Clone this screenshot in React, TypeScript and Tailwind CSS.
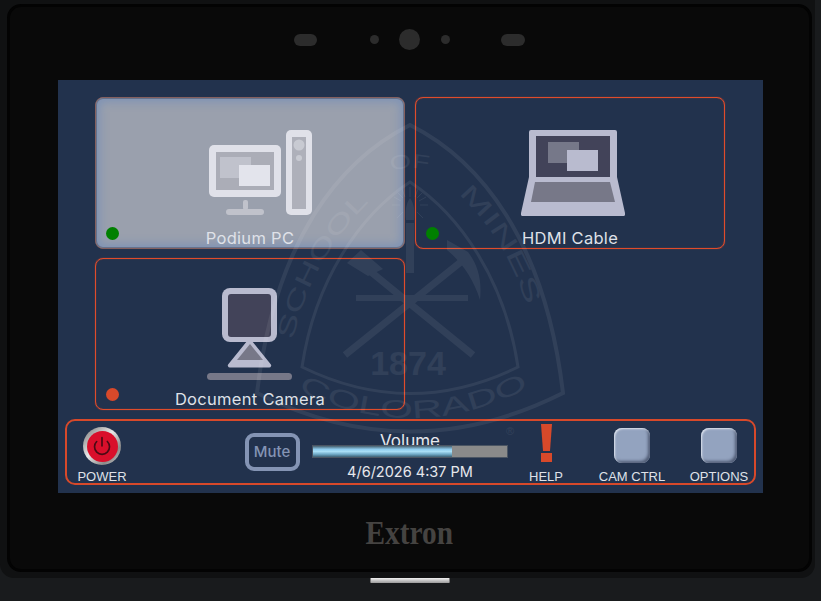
// App.tsx
import React from "react";
import { Power } from "lucide-react";

const sans = "font-['Inter',sans-serif]";
const arial = "font-['Liberation_Sans',sans-serif]";

// Podium PC: monitor + tower
const PcIcon = () => (
  <svg width="103" height="85" viewBox="209 130 103 85">
    <rect x="209" y="145" width="72" height="52" rx="5" fill="#e0e1e9" />
    <rect x="216" y="152" width="58" height="38" fill="#abadb7" />
    <rect x="220" y="157" width="31" height="21" fill="#c0c2cc" />
    <rect x="239" y="165" width="31" height="21" fill="#e3e4ec" />
    <rect x="243" y="200" width="5" height="10" rx="2" fill="#c0c2cb" />
    <rect x="226" y="209" width="38" height="6" rx="3" fill="#c0c2cb" />
    <rect x="286" y="130" width="26" height="85" rx="5" fill="#e0e1e9" />
    <rect x="292" y="137" width="14" height="72" fill="#aeb0ba" />
    <circle cx="299" cy="145" r="5.5" fill="#c8cad2" />
    <circle cx="299" cy="158" r="3" fill="#c8cad2" />
  </svg>
);

const LaptopIcon = () => (
  <svg width="104" height="86" viewBox="521 130 104 86">
    <path d="M531 130h84a2 2 0 0 1 2 2v45l8 36a2 2 0 0 1-2 3H523a2 2 0 0 1-2-3l8-36v-45a2 2 0 0 1 2-2z" fill="#b9bbcf" />
    <rect x="536" y="136" width="74" height="41" fill="#424359" />
    <rect x="548" y="142" width="31" height="21" fill="#767889" />
    <rect x="567" y="150" width="31" height="21" fill="#b9bbcf" />
    <path d="M535 182h75l5 20h-84z" fill="#777888" />
  </svg>
);

const DocCamIcon = () => (
  <svg width="86" height="92" viewBox="208 288 86 92">
    <path d="M250.5 338l21 26a2 2 0 0 1-1.5 3.5h-39a2 2 0 0 1-1.500-3.500z" fill="#b9bbcf" />
    <rect x="223" y="288" width="55" height="54" rx="8" fill="#b9bbcf" />
    <rect x="229" y="294" width="43" height="43" rx="3" fill="#424359" />
    <path d="M251 344l13 16h-26z" fill="#777888" />
    <rect x="208" y="373" width="85" height="7" rx="3.500" fill="#777888" />
  </svg>
);

// School crest watermark, sits over the cards at very low opacity
const Crest = () => (
  <svg
    className="absolute inset-0 pointer-events-none opacity-[0.065]"
    width="705"
    height="413"
    viewBox="58 80 705 413"
  >
    <defs>
      <path id="arc-school" d="M293 340C305 282 338 228 380 192" />
      <path id="arc-of" d="M391 171Q411 165 431 171" />
      <path id="arc-mines" d="M458 194C492 226 518 268 528 314" />
      <path id="arc-colorado" d="M298 390Q410 446 524 390" />
    </defs>
    <g fill="none" stroke="#fff">
      <path strokeWidth="4" d="M410 125C340 160 275 240 257 393Q410 470 563 393C545 240 480 160 410 125z" />
      <path strokeWidth="3" d="M410 182C360 215 315 280 302 367Q410 420 518 367C505 280 460 215 410 182z" />
      <path strokeWidth="7" d="M345 355L467 257" />
      <path strokeWidth="7" d="M473 355L360 263" />
      <path strokeWidth="6" d="M356 298H468" />
      <path strokeWidth="8" d="M410 223V273" />
      <path strokeWidth="1" d="M410 187V197M392 205H400M420 205H428M397 192L403 198M423 192L417 198M397 218L403 212M423 218L417 212M402 189L405 197M418 189L415 197M394 197L401 201M426 197L419 201" />
    </g>
    <g fill="#fff">
      <path d="M410 198c4 6 5 12 4 22h-8c-1-10 0-16 4-22z" />
      <path d="M347 263l14-13 22 19-15 7z" />
      <path d="M447 240l21 12C478 265 482 280 480 300 474 280 462 262 447 250z" />
      <text x="408" y="375" textAnchor="middle" fontFamily="Liberation Sans" fontWeight="700" fontSize="34">1874</text>
      <g fontFamily="Liberation Sans" fontSize="24">
        <text><textPath href="#arc-school" textLength="160" lengthAdjust="spacingAndGlyphs">SCHOOL</textPath></text>
        <text fontSize="20"><textPath href="#arc-of" textLength="38" lengthAdjust="spacingAndGlyphs">OF</textPath></text>
        <text><textPath href="#arc-mines" textLength="132" lengthAdjust="spacingAndGlyphs">MINES</textPath></text>
      </g>
      <text fontFamily="Liberation Sans" fontSize="25">
        <textPath href="#arc-colorado" textLength="240" lengthAdjust="spacingAndGlyphs">COLORADO</textPath>
      </text>
      <text x="510" y="435" textAnchor="middle" fontFamily="Liberation Sans" fontSize="11">®</text>
    </g>
  </svg>
);

interface SourceCardProps {
  label: string;
  dot: string;
  selected?: boolean;
  children: React.ReactNode;
}

const SourceCard: React.FC<SourceCardProps> = ({ label, dot, selected, children }) => (
  <div
    className={`relative h-[152px] w-[310px] rounded-[8px] border flex flex-col items-center justify-between ${
      selected
        ? "border-[#85605f] bg-[#9aa0ad] shadow-[inset_0_0_0_1px_#66728c,inset_0_0_9px_4px_#7f93b5] pt-[32px]"
        : "border-[#e04c2b] shadow-[inset_0_0_1px_#d8492a,0_0_1px_#d8492a] pt-[29px]"
    }`}
  >
    {children}
    <span className={`${sans} text-[16.5px] leading-[20px] tracking-[0.3px] text-[#dfe1e8]`}>{label}</span>
    <span className={`absolute left-[10px] bottom-[8px] h-[13px] w-[13px] rounded-full ${dot}`} />
  </div>
);

const BevelButton = () => (
  <div className="h-[35px] w-[36px] rounded-[8px] bg-[#93a3bf] shadow-[inset_1px_1px_2px_#e0e6f0,inset_-2px_-2px_3px_#4f5b74]" />
);

const BarLabel = ({ children }: { children: React.ReactNode }) => (
  <span className={`${arial} -mb-[1px] text-[13px] leading-[14px] text-[#dfe1e8] whitespace-nowrap`}>{children}</span>
);

const ControlBar = () => (
  <div className="ml-[7px] mt-[9px] flex h-[66px] w-[691px] rounded-[10px] border-2 border-[#d8492a]">
    <div className="flex w-[70px] flex-col items-center justify-between pt-[6px]">
      <div className="flex h-[38px] w-[38px] items-center justify-center rounded-full bg-[linear-gradient(135deg,#777,#e8e8e8_45%,#8a8a8a_75%,#d0d0d0)]">
        <div className="flex h-[31px] w-[31px] items-center justify-center rounded-full bg-[#d90f2b]">
          <Power size={20} strokeWidth={2} className="text-[#4a0a14]" />
        </div>
      </div>
      <BarLabel>POWER</BarLabel>
    </div>

    <div className="ml-[108px] mt-[12px] flex h-[38px] w-[55px] items-center justify-center rounded-[9px] border-4 border-[#8494b4]">
      <span className={`${sans} -ml-[1px] text-[15px] font-medium text-[#8494b4]`}>Mute</span>
    </div>

    <div className="ml-[12px] flex w-[196px] flex-col items-center">
      <span className={`${sans} mt-[10px] text-[17px] leading-[20px] text-[#e6e7ec]`}>Volume</span>
      <div className="relative -mt-[6px] h-[13px] w-[196px] border border-[#4b5563] bg-[#8a8a8a]">
        <div className="h-full w-[139px] bg-[linear-gradient(180deg,#47606f,#8fcdf0_30%,#a9def5_50%,#6fa9c6_75%,#3d5f73)]" />
      </div>
      <span className={`${sans} mt-[4px] text-[14.500px] leading-[20px] text-[#e6e7ec] whitespace-nowrap`}>4/6/2026 4:37 PM</span>
    </div>

    <div className="ml-[18px] flex w-[40px] flex-col items-center justify-between pt-[3px]">
      <svg width="11" height="38" viewBox="0 0 11 38">
        <path d="M0 0h11l-2 27H2z" fill="#d8492a" />
        <rect y="29" width="11" height="9" fill="#d8492a" />
      </svg>
      <BarLabel>HELP</BarLabel>
    </div>

    <div className="ml-[28px] flex w-[76px] flex-col items-center justify-between pt-[7px]">
      <BevelButton />
      <BarLabel>CAM CTRL</BarLabel>
    </div>

    <div className="ml-[14px] flex w-[70px] flex-col items-center justify-between pt-[7px]">
      <BevelButton />
      <BarLabel>OPTIONS</BarLabel>
    </div>
  </div>
);

const App: React.FC = () => {
  return (
    <div className="h-[601px] w-[821px] overflow-hidden bg-[#191b1d]">
      {/* housing */}
      <div className="h-[578px] w-[815px] rounded-b-[14px] bg-[#101112] pl-[7px] pt-[4px]">
        <div className="h-[568px] w-[805px] rounded-[14px] border-[3px] border-[#030303] bg-[#090909]">
          {/* camera + sensors */}
          <div className="flex h-[65px] items-center pl-[284px]">
            <span className="h-[12px] w-[23px] rounded-full bg-[#2c2c2c]" />
            <span className="ml-[53px] h-[9px] w-[9px] rounded-full bg-[#2c2c2c]" />
            <span className="ml-[20px] h-[21px] w-[21px] rounded-full bg-[#2c2c2c]" />
            <span className="ml-[21px] h-[9px] w-[9px] rounded-full bg-[#2c2c2c]" />
            <span className="ml-[51px] h-[12px] w-[24px] rounded-full bg-[#2c2c2c]" />
          </div>

          {/* screen */}
          <div className="relative ml-[48px] mt-[8px] h-[413px] w-[705px] bg-[#22324d] pt-[17px]">
            <div className="ml-[37px] grid grid-cols-[310px_310px] grid-rows-[152px_152px] gap-x-[10px] gap-y-[9px]">
              <SourceCard label="Podium PC" dot="bg-[#008000]" selected>
                <div className="ml-[21px]">
                  <PcIcon />
                </div>
              </SourceCard>
              <SourceCard label="HDMI Cable" dot="bg-[#008000]">
                <div className="ml-[6px] mt-[3px]">
                  <LaptopIcon />
                </div>
              </SourceCard>
              <SourceCard label="Document Camera" dot="bg-[#d8492a]">
                <DocCamIcon />
              </SourceCard>
            </div>
            <ControlBar />
            <Crest />
          </div>

          <div className="mt-[21px] flex justify-center">
            <span className="font-['Liberation_Serif',serif] text-[33px] font-bold leading-[38px] text-[#454341] scale-x-[0.89]">
              Extron
            </span>
          </div>
        </div>
      </div>
      {/* home button */}
      <div className="ml-[370px] h-[5px] w-[80px] rounded-b-[1px] border-x border-[#777] bg-[linear-gradient(180deg,#f0f0f0,#9a9a9a)]" />
    </div>
  );
};

export default App;
